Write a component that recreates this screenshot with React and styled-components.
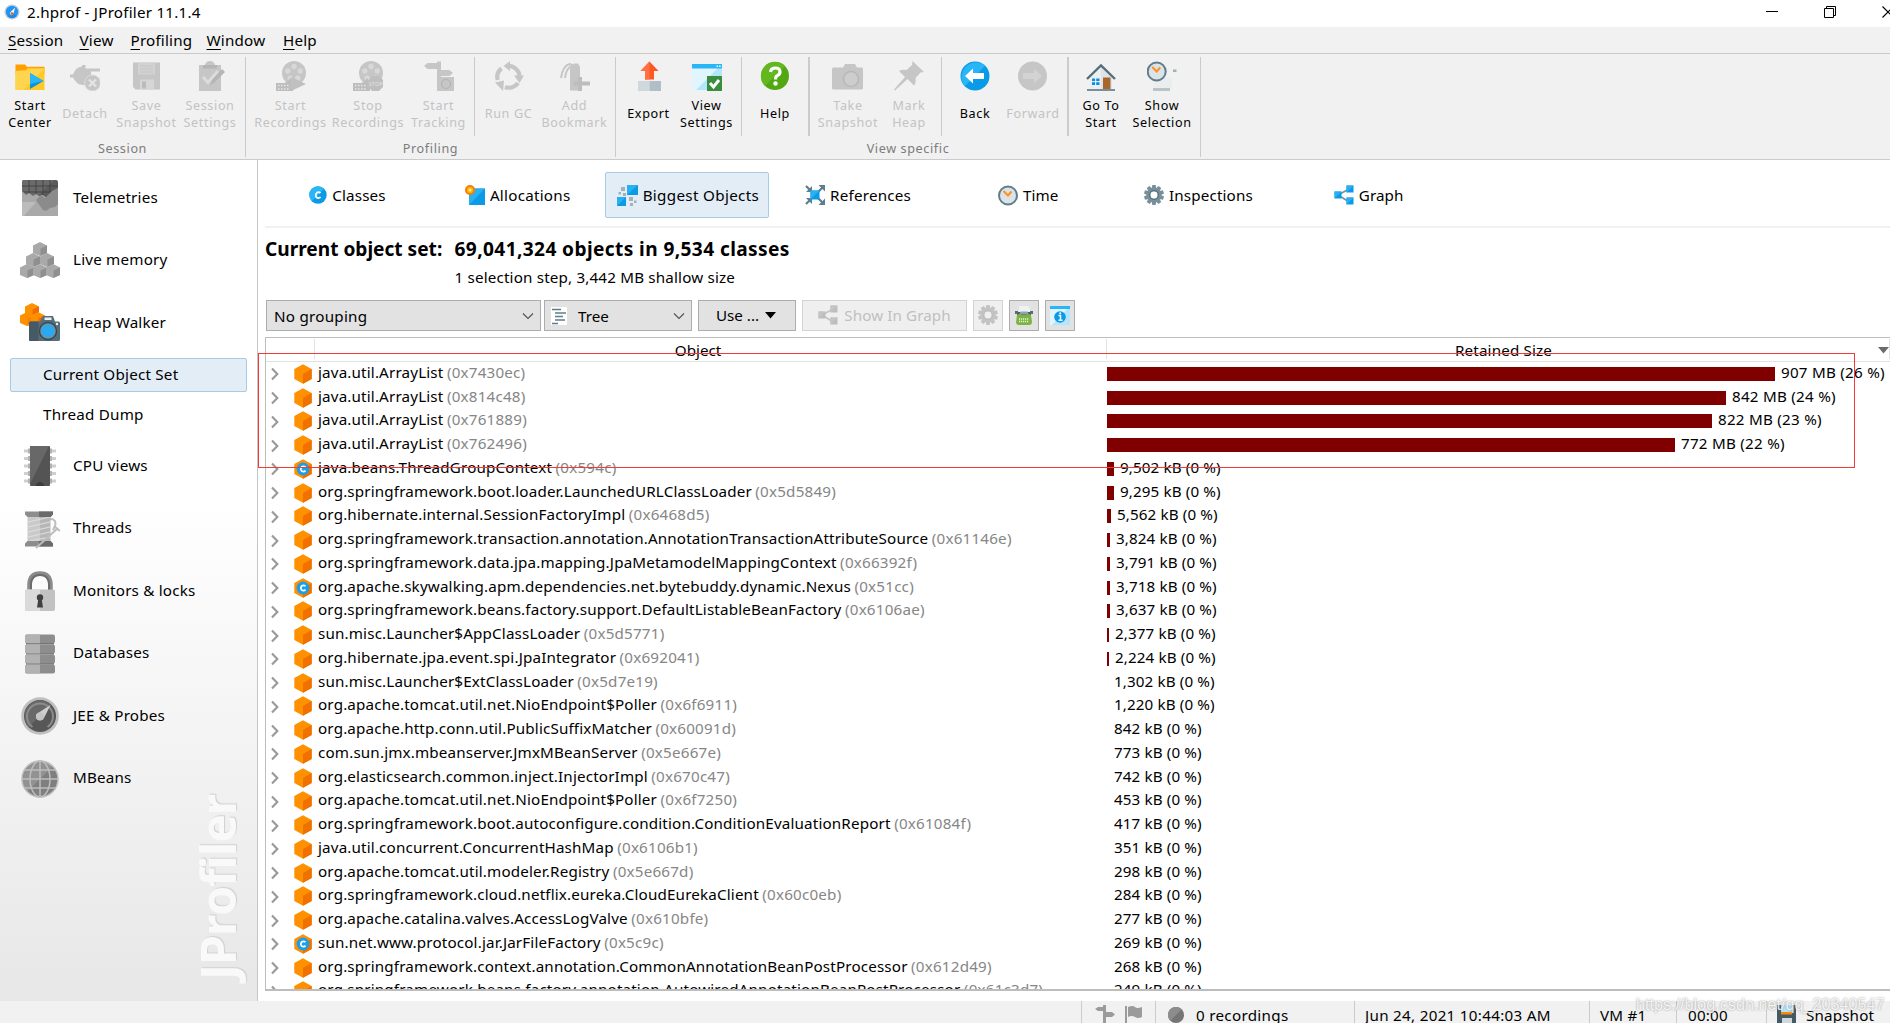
import React from "react";
import styled, { createGlobalStyle, css } from "styled-components";

const GlobalStyle = createGlobalStyle`
  * { box-sizing: border-box; }
  body { margin: 0; background: #fff; overflow: hidden; }
`;

const FONT = `"Noto Sans", "Open Sans", sans-serif`;

const Window = styled.div`
  position: relative;
  width: 1890px;
  height: 1023px;
  overflow: hidden;
  display: flex;
  flex-direction: column;
  background: #fff;
  color: #000;
  font-family: ${FONT};
  font-size: 15.2px;
  white-space: nowrap;
`;

/* ---------- title + menu ---------- */
const TitleBar = styled.header`
  height: 27px;
  flex: none;
  display: flex;
  align-items: center;
  padding: 0 0 3px 4px;
  gap: 7px;
`;
const TitleText = styled.span`
  flex: 1;
  letter-spacing: 0.22px;
`;
const WindowButtons = styled.div`
  display: flex;
  align-items: center;
  gap: 46px;
  margin-right: -4px;
`;
const MenuBar = styled.nav`
  height: 27px;
  flex: none;
  display: flex;
  align-items: center;
  background: #f1f1f1;
  border-bottom: 1px solid #cbcbcb;
  padding: 0 0 1px 8px;
`;
const MenuItem = styled.span`
  width: ${(p) => p.$w}px;
  letter-spacing: 0.2px;
  u { text-underline-offset: 3px; text-decoration-thickness: 1px; }
`;

/* ---------- toolbar ---------- */
const Toolbar = styled.div`
  height: 106px;
  flex: none;
  display: flex;
  background: #f1f1f1;
  border-bottom: 1px solid #cbcbcb;
  padding-top: 3px;
`;
const ToolGroup = styled.section`
  width: ${(p) => p.$w}px;
  height: 100px;
  border-right: 1px solid #cbcbcb;
  display: flex;
  flex-direction: column;
`;
const ToolRow = styled.div`
  height: 79px;
  display: flex;
  padding-left: ${(p) => p.$pl || 0}px;
`;
const ToolDivider = styled.i`
  width: ${(p) => p.$w || 1}px;
  margin-left: ${(p) => p.$ml || 0}px;
  background: #cbcbcb;
`;
const ToolButton = styled.button`
  width: ${(p) => p.$w}px;
  padding: 4px 0 0;
  border: 0;
  background: none;
  font: 12.6px/17px ${FONT};
  letter-spacing: 0.62px;
  color: ${(p) => (p.$off ? "#c3c3c3" : "#000")};
  display: flex;
  flex-direction: column;
  align-items: center;
  svg { flex: none; display: block; }
`;
const ToolLabel = styled.span`
  height: 34px;
  margin-top: ${(p) => (p.$single ? 5 : 6)}px;
  display: flex;
  flex-direction: column;
  align-items: center;
  justify-content: center;
`;
const GroupLabel = styled.div`
  height: 21px;
  padding-top: 2px;
  text-align: center;
  font-size: 12.6px;
  line-height: 22px;
  letter-spacing: 0.62px;
  color: #7c7c7c;
`;

/* ---------- sidebar ---------- */
const Body = styled.div`
  height: 841px;
  flex: none;
  display: flex;
`;
const Sidebar = styled.aside`
  position: relative;
  width: 258px;
  flex: none;
  border-right: 1px solid #c6c6c6;
  padding-top: 7px;
  background: linear-gradient(#fff 0%, #fff 40%, #e7e7e7 100%);
`;
const NavItem = styled.div`
  height: 62.5px;
  display: flex;
  align-items: center;
  padding-left: 20px;
  gap: 13px;
  letter-spacing: 0.2px;
  svg { flex: none; }
  span { margin-top: -3px; }
`;
const SubItem = styled.div`
  height: 34px;
  margin: 3px 10px 0;
  padding: 0 0 1px 32px;
  display: flex;
  align-items: center;
  letter-spacing: 0.22px;
  border: 1px solid ${(p) => (p.$active ? "#a6cce7" : "transparent")};
  border-radius: 2px;
  background: ${(p) => (p.$active ? "#e3edf6" : "transparent")};
  & + & { margin: 6px 10px 3.5px; }
`;
const Brand = styled.div`
  position: absolute;
  left: 191px;
  bottom: 21px;
  width: 52px;
  height: 200px;
  writing-mode: vertical-rl;
  transform: rotate(180deg);
  font: 700 48.5px/52px "Open Sans", sans-serif;
  letter-spacing: -1.4px;
  color: #f9f9f9;
  text-shadow: 1px 1px 1px #d0d0d0;
`;

/* ---------- main ---------- */
const Main = styled.main`
  flex: 1;
  min-width: 0;
  padding-left: 7px;
  display: flex;
  flex-direction: column;
`;
const Tabs = styled.div`
  height: 68px;
  flex: none;
  display: flex;
  gap: 6.2px;
  padding: 12px 0 0 0;
  border-bottom: 2px solid #f1f1f1;
`;
const Tab = styled.div`
  width: 164px;
  height: 46px;
  display: flex;
  align-items: center;
  justify-content: center;
  gap: 5px;
  padding-left: 1px;
  letter-spacing: ${(p) => p.$ls}px;
  border: 1px solid ${(p) => (p.$active ? "#a6cce7" : "transparent")};
  background: ${(p) => (p.$active ? "#e3edf6" : "transparent")};
  border-radius: 2px;
  span { margin-bottom: 1px; }
`;
const Summary = styled.div`
  height: 72px;
  flex: none;
  display: grid;
  grid-template-columns: 189.5px 1fr;
  grid-template-rows: 29px 24px;
  padding-top: 6px;
  align-items: center;
`;
const Heading = styled.h1`
  margin: 0;
  font-size: 19.1px;
  font-weight: 700;
  letter-spacing: ${(p) => p.$ls || 0}px;
`;
const Sub = styled.div`
  grid-column: 2;
  padding-top: 4px;
  letter-spacing: 0.17px;
`;
const Controls = styled.div`
  height: 37px;
  flex: none;
  display: flex;
  padding-left: 1px;
`;
const Control = styled.div`
  width: ${(p) => p.$w}px;
  height: 31px;
  margin-right: ${(p) => p.$mr}px;
  padding: ${(p) => p.$pad || "0"};
  display: flex;
  align-items: center;
  justify-content: ${(p) => (p.$spread ? "space-between" : "center")};
  gap: ${(p) => p.$gap || 6}px;
  border: 1px solid;
  ${(p) =>
    p.$off
      ? css`border-color: #d3d3d3; background: #efefef; color: #c0c0c0; letter-spacing: 0.1px;`
      : css`border-color: #adadad; background: #e2e2e2;`}
`;
const Inline = styled.span`
  display: flex;
  align-items: center;
  gap: 11px;
`;
const Table = styled.div`
  height: 654px;
  flex: none;
  overflow: hidden;
  border: 1px solid #bdbdbd;
  border-right: 0;
  border-bottom-width: 2px;
`;
const HeaderRow = styled.div`
  height: 24px;
  display: flex;
  border-bottom: 1px solid #e2e2e2;
  line-height: 24px;
`;
const HeaderCell = styled.div`
  width: ${(p) => p.$w}px;
  margin: 1px 0 2px;
  padding: 2px ${(p) => p.$pr || 0}px 0 0;
  text-align: center;
  border-right: 1px solid #e2e2e2;
  flex: ${(p) => (p.$grow ? 1 : "none")};
  display: flex;
  align-items: center;
  justify-content: center;
`;
const HeaderTitle = styled.span`
  flex: 1;
  padding-left: 22px;
  text-align: center;
  letter-spacing: 0.15px;
`;
const Row = styled.div`
  height: 23.76px;
  display: flex;
  align-items: center;
`;
const NameCell = styled.div`
  width: 841px;
  flex: none;
  display: flex;
  align-items: center;
  padding-left: 5px;
  svg { flex: none; }
`;
const Name = styled.span`
  margin: -4px 3.5px 0 6px;
  letter-spacing: 0.16px;
`;
const Address = styled.span`
  margin-top: -4px;
  color: #868686;
  letter-spacing: 0.2px;
`;
const Bar = styled.i`
  height: 14px;
  flex: none;
  background: #800000;
`;
const Size = styled.span`
  margin: -4px 0 0 ${(p) => (p.$bare ? 7 : 6)}px;
  letter-spacing: ${(p) => (p.$wide ? 0.24 : 0.12)}px;
`;

/* ---------- status ---------- */
const StatusBar = styled.footer`
  height: 22px;
  flex: none;
  display: flex;
  background: #f1f1f1;
  padding-left: 1081px;
`;
const StatusCell = styled.div`
  width: ${(p) => p.$w}px;
  height: 28px;
  flex: none;
  border-left: 1px solid #cbcbcb;
  padding-left: ${(p) => p.$pl}px;
  display: flex;
  align-items: center;
  gap: ${(p) => p.$gap || 10}px;
  letter-spacing: ${(p) => p.$ls || 0}px;
`;
const Watermark = styled.div`
  position: absolute;
  left: 1636px;
  top: 993px;
  font: 16.2px/22px "Liberation Sans", Arial, sans-serif;
  color: rgba(255, 255, 255, 0.85);
  text-shadow: 0 0 2px rgba(110, 110, 110, 0.75);
`;
const Annotation = styled.div`
  position: absolute;
  left: 258px;
  top: 353px;
  width: 1597px;
  height: 115px;
  border: 1px solid #f23b36;
`;

/* ---------- icons ---------- */
const G = "#c6c6c6";
const Svg = ({ s = 30, w, h, vb, children }) => (
  <svg width={w || s} height={h || s} viewBox={vb || `0 0 ${w || s} ${h || s}`}>{children}</svg>
);

const AppIcon = () => (
  <Svg s={16}>
    <circle cx="8" cy="8" r="7.6" fill="#c9d0d4" />
    <circle cx="8" cy="8" r="6.2" fill="#2196f3" />
    <path d="M8 8 3.6 12.3A6.2 6.2 0 0 0 12.4 12.3z" fill="#1e88e5" />
    <path d="M11.2 3.6 6.2 8.6Q5.8 11.2 7.4 11.2 9 11 9.4 9.4z" fill="#fff" />
    <circle cx="8" cy="9.6" r="1.3" fill="#f4511e" />
  </Svg>
);
const icons = {
  folder: (
    <Svg>
      <path d="M.5 3.5h9.500l2 2.300h17.500v7H.5z" fill="#ffa000" />
      <path d="M.5 10l10.500-.5 1.500-2h17V29H.5z" fill="#ffca28" />
      <path d="M.5 10l10.500-.5 1.500-2h17L8 29H.5z" fill="#ffd54f" />
      <path d="M15 12v16l13.500-8z" fill="#0a93de" />
      <path d="M15 12v11l13.500-3z" fill="#29b6f6" />
    </Svg>
  ),
  detach: (
    <Svg>
      <path d="M0 13.500h3Q5.500 6 12 5.500V4h3.500v3.500H30v3h-9V15h-1v7h-4.500v2H12Q6 23 3 16.500H0z" fill={G} />
      <circle cx="22.500" cy="22" r="8" fill={G} stroke="#dedede" strokeWidth=".8" />
      <path d="m19 18.500 7 7m0-7-7 7" stroke="#e4e4e4" strokeWidth="2.400" />
    </Svg>
  ),
  save: (
    <Svg w={29}>
      <path d="M1 1.500h27v27H3.500L1 26z" fill={G} />
      <path d="M6 1.500h17v12H6z" fill="#d2d2d2" />
      <path d="M8 5h13M8 8h13M8 11h13" stroke={G} />
      <path d="M8 18.500h14v10H8z" fill="#d6d6d6" />
      <path d="M10 20.500h4v7h-4z" fill="#bcbcbc" />
    </Svg>
  ),
  clipboard: (
    <Svg>
      <path d="M4 4h6q1-4 5-4t5 4h6v26H4z" fill={G} />
      <path d="M8 4h14v3.500H8z" fill="#b5b5b5" />
      <path d="m8 16 5 5.500L23 10" stroke="#dcdcdc" strokeWidth="3" fill="none" />
      <path d="m15 24 2-5L27 8l3 3-11 11z" fill="#b5b5b5" />
    </Svg>
  ),
  reelPlay: <Reel play />,
  reelStop: <Reel />,
  track: (
    <Svg>
      <g fill={G}>
        <path d="M0 5 3.500 2H13V.500h4V9h8.500L29 12l-3.500 3H17v15h-4V8H3.500z" />
        <path d="M14 16h16v14H14z" />
      </g>
      <circle cx="22" cy="23" r="4.500" fill="none" stroke="#b3b3b3" strokeWidth="1.200" />
    </Svg>
  ),
  gc: (
    <Svg>
      <g fill="none" stroke={G} strokeWidth="4.200">
        <path d="M3.700 19A11 11 0 0 1 7.500 7.500" />
        <path d="M13 5A11 11 0 0 1 25.500 15" />
        <path d="M24 22A11 11 0 0 1 11 26" />
      </g>
      <path d="M16 0v10L9.500 5zM30 14.500 25.500 22 20 14.500zM1 21.500l9-2-1 10.500z" fill={G} />
    </Svg>
  ),
  bookmark: (
    <Svg>
      <path d="M1 17Q3 4 10 3q5 1 4 10M5 17q1-10 7-12" fill="none" stroke={G} strokeWidth="2" />
      <path d="M10 6l4-3.500h4L20 6v23.500H10z" fill={G} />
      <path d="M20 16v14M13.500 22.500h16.500" stroke="#bdbdbd" strokeWidth="4" />
    </Svg>
  ),
  exportI: (
    <Svg>
      <path d="M4 20H15.500v10.500H4z" fill="#cfd8dc" />
      <path d="M15.500 20h11.500v10.500H15.500z" fill="#b0bec5" />
      <path d="M15.500.500 24.500 10H20v8.500h-9V10H6.500z" fill="#ff5722" />
      <path d="M15.500.500 6.500 10H11v8.500h4.500z" fill="#ff7043" />
    </Svg>
  ),
  view: (
    <Svg>
      <path d="M0 3h30v26H0z" fill="#b3e5fc" />
      <path d="M0 3h30L4 29H0z" fill="#e1f5fe" />
      <path d="M0 3h30v4.500H0z" fill="#29b6f6" />
      <path d="M24.500 5.200h1.600M27 5.200h1.600" stroke="#fff" strokeWidth="1.400" />
      <path d="M15 15h15v15H15z" fill="#388e3c" />
      <path d="m18 22 3.500 4L27 19" fill="none" stroke="#fff" strokeWidth="3" />
    </Svg>
  ),
  help: (
    <Svg>
      <circle cx="15" cy="15" r="14" fill="#52a812" />
      <path d="M5 25A14 14 0 0 1 25 5z" fill="#64b81f" />
      <path d="M10.500 11Q11 7 15.500 7T20 11q0 2.300-2.700 3.700Q15.500 15.700 15.500 18.500" fill="none" stroke="#fff" strokeWidth="3.200" />
      <circle cx="15.500" cy="22.500" r="2.200" fill="#fff" />
    </Svg>
  ),
  camera: (
    <Svg w={32} h={30}>
      <path d="M0 8q0-1.500 1.500-1.500H11L13 3h10l2 3.500h4.500Q31 6.500 31 8v19q0 1.500-1.500 1.500h-28Q0 28.500 0 27z" fill={G} />
      <circle cx="19" cy="18" r="7.500" fill="#cdcdcd" stroke="#b8b8b8" strokeWidth="1.600" />
    </Svg>
  ),
  pin: (
    <Svg>
      <path d="M18.500 0 30 11l-3.500.5-5 5.500q1 5-1.500 7.500L13.500 18 1 29.500 0 28.500 11 16 5 10q3-2 7.500-1L18 4z" fill={G} />
    </Svg>
  ),
  back: (
    <Svg>
      <circle cx="15" cy="15" r="14.500" fill="#0a9be8" />
      <path d="M4.800 25.200A14.500 14.500 0 0 1 25.200 4.800z" fill="#29b6f6" />
      <path d="M5 15l8-7.500V12h11v6H13v4.500z" fill="#fff" />
    </Svg>
  ),
  forward: (
    <Svg>
      <circle cx="14.500" cy="15" r="14.500" fill={G} />
      <path d="M24 15l-8-7.500V12H5v6h11v4.500z" fill="#d3d3d3" />
    </Svg>
  ),
  home: (
    <Svg>
      <path d="M4 15 15 5l11 10v13H4z" fill="#eceff1" />
      <path d="M15 5l11 10v13H15z" fill="#dfe3e6" />
      <path d="M1 28h28v2H1z" fill="#78909c" />
      <path d="M1 18 15 4.500 29 18" fill="none" stroke="#546e7a" strokeWidth="2.400" />
      <path d="M17 16.500h7.500V28H17z" fill="#a8662a" />
      <path d="M6 17.500h7.500v6.500H6z" fill="#0a8fdc" />
      <path d="M9.700 17v8M5.500 20.700h8.500" stroke="#fff" strokeWidth="1" />
    </Svg>
  ),
  showSel: (
    <Svg>
      <path d="M7 16h18v11H7z" fill="#eaeeef" />
      <path d="M6 27h17v3H6z" fill="#b8c4ca" />
      <rect x="26" y="8.500" width="3.500" height="2.500" fill="#9fb0b8" />
      <g transform="translate(-.300 0)"><Clock /></g>
    </Svg>
  ),
};
function Clock() {
  return (
    <>
      <circle cx="10" cy="10.500" r="9" fill="#dce3e6" stroke="#607d8b" strokeWidth="2" />
      <path d="M5.500 6 10 10.500 13.500 6.500" fill="none" stroke="#ff9020" strokeWidth="2" />
    </>
  );
}
function Reel({ play }) {
  return (
    <Svg>
      <circle cx="18" cy="12" r="12" fill={G} />
      <g fill="#d8d8d8">
        <circle cx="18" cy="5.500" r="2.700" /><circle cx="11.800" cy="10" r="2.700" /><circle cx="24.200" cy="10" r="2.700" />
        <circle cx="14.200" cy="17.300" r="2.700" /><circle cx="21.800" cy="17.300" r="2.700" />
      </g>
      <path d="M0 22h8q4-1 6-5l3 5v8H0z" fill="#bdbdbd" />
      <path d="M2 24.500h11M2 28h11" stroke="#e6e6e6" strokeWidth="1.300" strokeDasharray="1.500 1.500" />
      {play ? (
        <path d="M15 16v14l15-7z" fill="#c0c0c0" />
      ) : (
        <>
          <path d="M19 15h7l4.500 4.500v6L26 30h-7l-4-4.500v-6z" fill="#bfbfbf" />
          <text x="22.700" y="24.500" fontSize="5.500" fontWeight="700" fill="#d8d8d8" textAnchor="middle" letterSpacing="0">STOP</text>
        </>
      )}
    </Svg>
  );
}

const Cube = ({ x, y, c, d }) => (
  <g transform={`translate(${x} ${y})`}>
    <path d="M7 0l7 3.500v7.500L7 14 0 11V3.500z" fill={c} />
    <path d="M14 3.500V11L7.500 14V6.500z" fill={d} />
  </g>
);
const side = {
  tele: (
    <Svg s={40}>
      <rect x="2" y="2" width="36" height="36" rx="2" fill="#5a5a5a" />
      <path d="M2 4q0-2 2-2h30L14 22H2z" fill="#6a6a6a" />
      <path d="M2 8h36M2 14h36M9 2v16M16 2v16M23 2v16M30 2v16" stroke="#444" strokeWidth="1" />
      <path d="M2 13l4 4 3-2 4 3 3-2 3 2 4-1 4 3 4-5 4-2 3-3v26q0 2-2 2H4q-2 0-2-2z" fill="#a9a9a9" />
      <path d="M16 22l5-5 4 3 3-3 4-4 6-3v16l-3 3-5 1-4 3-3-1-3-4z" fill="#8b8b8b" />
      <path d="M2 24l14 0L4 38q-2 0-2-2z" fill="#bcbcbc" />
    </Svg>
  ),
  live: (
    <Svg s={40}>
      <Cube x={13} y={1} c="#a9a9a9" d="#8f8f8f" />
      <Cube x={6} y={12} c="#a9a9a9" d="#8f8f8f" /><Cube x={20} y={12} c="#a9a9a9" d="#8f8f8f" />
      <Cube x={0} y={23} c="#a9a9a9" d="#8f8f8f" /><Cube x={13} y={23} c="#a9a9a9" d="#8f8f8f" /><Cube x={26} y={23} c="#a9a9a9" d="#8f8f8f" />
    </Svg>
  ),
  heap: (
    <Svg s={40}>
      <Cube x={5} y={0} c="#ff9100" d="#ef6c00" />
      <Cube x={0} y={9} c="#ff9100" d="#ff8000" /><Cube x={11} y={9} c="#ff8f00" d="#ef6c00" />
      <path d="M9 20q0-1.500 1.500-1.500H20l3-5.500h10l2 5.500h3.500q1.500 0 1.500 1.500v16.500Q40 38 38.500 38h-28Q9 38 9 36.500z" fill="#546e7a" />
      <path d="M9 20q0-1.500 1.500-1.500h8V38h-8Q9 38 9 36.500z" fill="#455a64" />
      <path d="M24.500 14.500h7v2.500h-7z" fill="#eceff1" />
      <circle cx="28" cy="28" r="9.200" fill="#37474f" /><circle cx="28" cy="28" r="7.800" fill="#78909c" /><circle cx="28" cy="28" r="6.500" fill="#29a9f2" />
      <circle cx="37" cy="21" r="1.200" fill="#eceff1" />
    </Svg>
  ),
  cpu: (
    <Svg s={40}>
      <path d="M4 5h32M4 12.500h32M4 20h32M4 27.500h32M4 35h32" stroke="#cfcfcf" strokeWidth="3" />
      <path d="M8 5h24M8 12.500h24M8 20h24M8 27.500h24M8 35h24" stroke="#b3b3b3" strokeWidth="5" />
      <rect x="10" y="0" width="20" height="40" rx="1" fill="#545454" />
      <path d="M11 0h18L10 38V1q0-1 1-1z" fill="#686868" />
      <path d="M16 40a4 4 0 0 1 8 0z" fill="#3d3d3d" />
    </Svg>
  ),
  threads: (
    <Svg s={40}>
      <path d="M7.500 7H20v26H7.500z" fill="#cacaca" /><path d="M20 7h10.500v26H20z" fill="#b7b7b7" />
      <path d="M8 13l22-5M8 18l22-5M8 23l22-5M8 28l22-5M10 32l20-4" stroke="#dedede" strokeWidth="1.200" />
      <path d="M5 2.500h28v3L30.500 8h-23L5 5.500zM5 37.500h28v-3L30.500 32h-23L5 34.500z" fill="#8d8d8d" />
      <path d="M19 2.500h14v3L30.500 8H19zM19 37.500h14v-3L30.500 32H19z" fill="#6b6b6b" />
      <path d="M30 10q7 0 5 7l-2 4M16 39l22-20M34 17l6 5" fill="none" stroke="#bdbdbd" strokeWidth="2" />
    </Svg>
  ),
  lock: (
    <Svg s={40}>
      <path d="M9.500 20v-7Q10 2.500 20 2.500T30.500 13v7" fill="none" stroke="#8a8a8a" strokeWidth="4.500" />
      <path d="M11 20v-7Q11.500 4 20 4t9 9v7" fill="none" stroke="#6c6c6c" strokeWidth="2" />
      <rect x="5" y="18.500" width="30" height="21.500" rx="2" fill="#c2c2c2" />
      <path d="M5 20.500q0-2 2-2h13V40H7q-2 0-2-2z" fill="#dadada" />
      <circle cx="20" cy="26.500" r="3.200" fill="#404040" /><path d="M18.500 27h3l1.500 9.500h-6z" fill="#404040" />
    </Svg>
  ),
  db: (
    <Svg s={40}>
      {[0, 1, 2, 3].map((i) => (
        <g key={i} transform={`translate(0 ${i * 10.1})`}>
          {i < 3 && <path d="M6 7.500h28v3H6z" fill="#6d6d6d" />}
          <rect x="5" y="0.500" width="30" height="8.800" rx="2" fill="#8d8d8d" />
          <path d="M7 .500h13v8.800H7q-2 0-2-2v-4.800q0-2 2-2z" fill="#b2b2b2" />
        </g>
      ))}
    </Svg>
  ),
  gauge: (
    <Svg s={40}>
      <circle cx="20" cy="20" r="18.800" fill="#bfbfbf" />
      <circle cx="20" cy="20" r="16" fill="#575757" />
      <path d="M8.700 31.300A16 16 0 0 1 31.300 8.700z" fill="#686868" />
      <path d="M12.500 31A13 13 0 1 1 27.500 31" fill="none" stroke="#8c8c8c" strokeWidth="2" />
      <path d="M30.500 9 24 22q-2 3-5.500 2-4-2-2-6z" fill="#cfcfcf" /><circle cx="20" cy="20.500" r="4" fill="#c4c4c4" />
    </Svg>
  ),
  globe: (
    <Svg s={40}>
      <circle cx="20" cy="20" r="18" fill="#7f7f7f" />
      <path d="M7.300 32.700A18 18 0 0 1 32.700 7.300z" fill="#929292" />
      <g fill="none" stroke="#bdbdbd" strokeWidth="1.500">
        <circle cx="20" cy="20" r="18" /><ellipse cx="20" cy="20" rx="10" ry="18" />
        <path d="M20 2v36M2 20h36M5 11h30M5 29h30" />
      </g>
    </Svg>
  ),
};

const GraphGlyph = ({ a, b, l }) => (
  <Svg s={20}>
    <path d="M4 10 16 3.500M4 10l12 7.500" stroke={l} strokeWidth="1.600" />
    <path d="M.500 6.500h7v7h-7zM12.500.500h7v7h-7zM12.500 12.500h7v7h-7z" fill={a} />
    <path d="M.500 6.500h7l-7 7zM12.500.500h7l-7 7zM12.500 12.500h7l-7 7z" fill={b} />
  </Svg>
);
const teeth = Array.from({ length: 10 }, (_, i) => i * 36);
const Gear = ({ c, c2 }) => (
  <Svg s={20}>
    {teeth.map((a) => (
      <path key={a} d="M8.300 0h3.400l.6 4H7.700z" fill={c} transform={`rotate(${a} 10 10)`} />
    ))}
    <circle cx="10" cy="10" r="5.600" fill="none" stroke={c} strokeWidth="3.600" />
    <circle cx="10" cy="10" r="4.300" fill="none" stroke={c2} strokeWidth="1.200" />
  </Svg>
);
const tabIcons = {
  classes: (
    <Svg s={18}>
      <circle cx="9" cy="9" r="8.700" fill="#0a9ae6" />
      <path d="M2.800 15.200A8.700 8.700 0 0 1 15.200 2.800z" fill="#29b6f6" />
      <path d="M11.500 7Q9.800 5.500 8.200 6.500 6.600 7.600 6.800 9.700 7.300 12 9.200 12q1.500 0 2.300-1" fill="none" stroke="#fff" strokeWidth="1.900" />
    </Svg>
  ),
  alloc: (
    <Svg s={20}>
      <path d="M4 3.500h16V20H4z" fill="#0a9ae6" /><path d="M4 3.500h16L4 20z" fill="#29b0f3" />
      <circle cx="5" cy="5" r="5" fill="#f57c00" /><circle cx="5" cy="5" r="3.200" fill="#ffb300" /><circle cx="5" cy="5" r="1.500" fill="#ffe9a8" />
    </Svg>
  ),
  biggest: (
    <Svg s={21}>
      <path d="M10 0h11v10H10z" fill="#0a9ae6" /><path d="M10 0h11L10 10z" fill="#29b0f3" />
      <path d="M0 12h9v9H0z" fill="#0a9ae6" /><path d="M0 12h9l-9 9z" fill="#29b0f3" />
      <path d="M4 2h4v4H4zM1.500 7H4v2.500H1.500zM6 8h3v3H6zM12 12h4v4h-4zM17 15.500h2.500V18H17zM13 18h3v3h-3z" fill="#a3b2ba" />
    </Svg>
  ),
  refs: (
    <Svg s={20}>
      <path d="M1 1l7 7M19 1l-7 7M1 19l7-7M19 19l-7-7" stroke="#607d8b" strokeWidth="2.200" />
      <path d="M1 7h6V1zM20 6.500V0h-6.500zM1 13h6v6zM20 13.500V20h-6.500z" fill="#607d8b" />
      <path d="M5.500 5.500h9v9h-9z" fill="#0a9ae6" /><path d="M5.500 5.500h9l-9 9z" fill="#29b0f3" />
    </Svg>
  ),
  time: <Svg w={20} h={21}><Clock /></Svg>,
  gear: <Gear c="#78909c" c2="#546e7a" />,
  graph: <GraphGlyph a="#0a9ae6" b="#29b0f3" l="#78909c" />,
};

const Hex = ({ cls }) => (
  <Svg w={18} h={20}>
    <path d="M9 .300 17.700 5v10L9 19.700.300 15V5z" fill="#ff9100" />
    <path d="M17.700 5v10L9 19.700V10z" fill="#f07000" />
    {cls && (
      <>
        <circle cx="9" cy="10" r="6.400" fill="#1a9fe8" />
        <path d="M11.500 8Q9.500 6.700 8 7.800 6.500 9 6.900 10.800 7.500 12.700 9.300 12.600q1.400-.1 2.200-1" fill="none" stroke="#fff" strokeWidth="1.800" />
      </>
    )}
  </Svg>
);
const Arrow = styled.svg`
  width: 8px;
  height: 14px;
  margin: 1px 15px 0 0;
`;
const Chevron = () => (
  <Svg w={12} h={8}><path d="M1 1.500l5 5 5-5" fill="none" stroke="#555" strokeWidth="1.200" /></Svg>
);

/* ---------- data ---------- */
const ROWS = [
  ["java.util.ArrayList", "0x7430ec", "907 MB (26 %)", 668],
  ["java.util.ArrayList", "0x814c48", "842 MB (24 %)", 619],
  ["java.util.ArrayList", "0x761889", "822 MB (23 %)", 605],
  ["java.util.ArrayList", "0x762496", "772 MB (22 %)", 568],
  ["java.beans.ThreadGroupContext", "0x594c", "9,502 kB (0 %)", 7, 1],
  ["org.springframework.boot.loader.LaunchedURLClassLoader", "0x5d5849", "9,295 kB (0 %)", 7],
  ["org.hibernate.internal.SessionFactoryImpl", "0x6468d5", "5,562 kB (0 %)", 4],
  ["org.springframework.transaction.annotation.AnnotationTransactionAttributeSource", "0x61146e", "3,824 kB (0 %)", 3],
  ["org.springframework.data.jpa.mapping.JpaMetamodelMappingContext", "0x66392f", "3,791 kB (0 %)", 3],
  ["org.apache.skywalking.apm.dependencies.net.bytebuddy.dynamic.Nexus", "0x51cc", "3,718 kB (0 %)", 3, 1],
  ["org.springframework.beans.factory.support.DefaultListableBeanFactory", "0x6106ae", "3,637 kB (0 %)", 3],
  ["sun.misc.Launcher$AppClassLoader", "0x5d5771", "2,377 kB (0 %)", 2],
  ["org.hibernate.jpa.event.spi.JpaIntegrator", "0x692041", "2,224 kB (0 %)", 2],
  ["sun.misc.Launcher$ExtClassLoader", "0x5d7e19", "1,302 kB (0 %)", 0],
  ["org.apache.tomcat.util.net.NioEndpoint$Poller", "0x6f6911", "1,220 kB (0 %)", 0],
  ["org.apache.http.conn.util.PublicSuffixMatcher", "0x60091d", "842 kB (0 %)", 0],
  ["com.sun.jmx.mbeanserver.JmxMBeanServer", "0x5e667e", "773 kB (0 %)", 0],
  ["org.elasticsearch.common.inject.InjectorImpl", "0x670c47", "742 kB (0 %)", 0],
  ["org.apache.tomcat.util.net.NioEndpoint$Poller", "0x6f7250", "453 kB (0 %)", 0],
  ["org.springframework.boot.autoconfigure.condition.ConditionEvaluationReport", "0x61084f", "417 kB (0 %)", 0],
  ["java.util.concurrent.ConcurrentHashMap", "0x6106b1", "351 kB (0 %)", 0],
  ["org.apache.tomcat.util.modeler.Registry", "0x5e667d", "298 kB (0 %)", 0],
  ["org.springframework.cloud.netflix.eureka.CloudEurekaClient", "0x60c0eb", "284 kB (0 %)", 0],
  ["org.apache.catalina.valves.AccessLogValve", "0x610bfe", "277 kB (0 %)", 0],
  ["sun.net.www.protocol.jar.JarFileFactory", "0x5c9c", "269 kB (0 %)", 0, 1],
  ["org.springframework.context.annotation.CommonAnnotationBeanPostProcessor", "0x612d49", "268 kB (0 %)", 0],
  ["org.springframework.beans.factory.annotation.AutowiredAnnotationBeanPostProcessor", "0x61c3d7", "249 kB (0 %)", 0],
];

const Tool = ({ w, icon, lines, off }) => (
  <ToolButton $w={w} $off={off}>
    {icons[icon]}
    <ToolLabel $single={lines.length === 1}>{lines.map((l) => <span key={l}>{l}</span>)}</ToolLabel>
  </ToolButton>
);

const MENU = [["S", "ession", 71.5], ["V", "iew", 51], ["P", "rofiling", 76], ["W", "indow", 76.5], ["H", "elp", 60]];
const TABS = [
  ["Classes", "classes", 0.15], ["Allocations", "alloc", 0.25], ["Biggest Objects", "biggest", 0.33], ["References", "refs", 0.22],
  ["Time", "time", 0.1], ["Inspections", "gear", 0.15], ["Graph", "graph", 0.1],
];

export default function App() {
  return (
    <Window>
      <GlobalStyle />
      <TitleBar>
        <AppIcon />
        <TitleText>2.hprof - JProfiler 11.1.4</TitleText>
        <WindowButtons>
          <Svg s={12}><path d="M0 5.500h12" stroke="#000" /></Svg>
          <Svg s={12}><path d="M.500 2.500h9v9h-9zM2.500 2.500v-2h9v9h-2" fill="none" stroke="#000" /></Svg>
          <Svg s={12}><path d="M.500.500l11 11M11.500.500l-11 11" stroke="#000" strokeWidth="1.200" /></Svg>
        </WindowButtons>
      </TitleBar>
      <MenuBar>
        {MENU.map(([a, b, w]) => <MenuItem key={b} $w={w}><u>{a}</u>{b}</MenuItem>)}
      </MenuBar>
      <Toolbar>
        <ToolGroup $w={246}>
          <ToolRow>
            <Tool w={60} icon="folder" lines={["Start", "Center"]} />
            <Tool w={50} icon="detach" lines={["Detach"]} off />
            <Tool w={73} icon="save" lines={["Save", "Snapshot"]} off />
            <Tool w={54} icon="clipboard" lines={["Session", "Settings"]} off />
          </ToolRow>
          <GroupLabel>Session</GroupLabel>
        </ToolGroup>
        <ToolGroup $w={370}>
          <ToolRow $pl={6}>
            <Tool w={77} icon="reelPlay" lines={["Start", "Recordings"]} off />
            <Tool w={78} icon="reelStop" lines={["Stop", "Recordings"]} off />
            <Tool w={63} icon="track" lines={["Start", "Tracking"]} off />
            <ToolDivider $ml={4} />
            <Tool w={67} icon="gc" lines={["Run GC"]} off />
            <Tool w={65} icon="bookmark" lines={["Add", "Bookmark"]} off />
          </ToolRow>
          <GroupLabel>Profiling</GroupLabel>
        </ToolGroup>
        <ToolGroup $w={585}>
          <ToolRow>
            <Tool w={65} icon="exportI" lines={["Export"]} />
            <Tool w={51} icon="view" lines={["View", "Settings"]} />
            <ToolDivider $ml={9} />
            <Tool w={66} icon="help" lines={["Help"]} />
            <ToolDivider $w={2} />
            <Tool w={76} icon="camera" lines={["Take", "Snapshot"]} off />
            <Tool w={46} icon="pin" lines={["Mark", "Heap"]} off />
            <ToolDivider $ml={9} />
            <Tool w={66} icon="back" lines={["Back"]} />
            <Tool w={50} icon="forward" lines={["Forward"]} off />
            <ToolDivider $ml={9} $w={2} />
            <Tool w={64} icon="home" lines={["Go To", "Start"]} />
            <Tool w={58} icon="showSel" lines={["Show", "Selection"]} />
          </ToolRow>
          <GroupLabel>View specific</GroupLabel>
        </ToolGroup>
      </Toolbar>
      <Body>
        <Sidebar>
          <NavItem>{side.tele}<span>Telemetries</span></NavItem>
          <NavItem>{side.live}<span>Live memory</span></NavItem>
          <NavItem>{side.heap}<span>Heap Walker</span></NavItem>
          <SubItem $active>Current Object Set</SubItem>
          <SubItem>Thread Dump</SubItem>
          <NavItem>{side.cpu}<span>CPU views</span></NavItem>
          <NavItem>{side.threads}<span>Threads</span></NavItem>
          <NavItem>{side.lock}<span>Monitors &amp; locks</span></NavItem>
          <NavItem>{side.db}<span>Databases</span></NavItem>
          <NavItem>{side.gauge}<span>JEE &amp; Probes</span></NavItem>
          <NavItem>{side.globe}<span>MBeans</span></NavItem>
          <Brand>JProfiler</Brand>
        </Sidebar>
        <Main>
          <Tabs>
            {TABS.map(([t, i, ls]) => (
              <Tab key={t} $active={i === "biggest"} $ls={ls}>{tabIcons[i]}<span>{t}</span></Tab>
            ))}
          </Tabs>
          <Summary>
            <Heading>Current object set:</Heading>
            <Heading $ls={0.4}>69,041,324 objects in 9,534 classes</Heading>
            <Sub>1 selection step, 3,442 MB shallow size</Sub>
          </Summary>
          <Controls>
            <Control $w={275} $mr={3} $spread $pad="0 6px 0 7px"><ControlText>No grouping</ControlText><Chevron /></Control>
            <Control $w={148} $mr={6} $spread $pad="0 6px 0 6px">
              <Inline>
                <Svg w={16} h={18}>
                  <path d="M0 0h16v18H0z" fill="#fff" />
                  <path d="M1 2.500h9M4 6h11M4 9.500h8M4 13h10M1 16.500h6" stroke="#607d8b" strokeWidth="1.600" />
                </Svg>
                Tree
              </Inline>
              <Chevron />
            </Control>
            <Control $w={98} $mr={6} $gap={6} $pad="0 2px 1px 0">
              Use ...<Svg w={11} h={7}><path d="M0 0h11L5.500 6.500z" fill="#000" /></Svg>
            </Control>
            <Control $w={165} $mr={6} $off $pad="0 0 1px"><GraphGlyph a="#bdbdbd" b="#c4c4c4" l="#c4c4c4" />Show In Graph</Control>
            <Control $w={30} $mr={6} $off $pad="0 0 2px"><Gear c="#c3c3c3" c2="#bcbcbc" /></Control>
            <Control $w={30} $mr={6}>
              <Svg s={20}>
                <path d="M5 0h9l2 2v6H5z" fill="#eef2f4" />
                <path d="M3 6h14v4H3z" fill="#455a64" /><path d="M1 5h3v3H1zM16 5h3v3h-3z" fill="#546e7a" />
                <path d="M6.500 5.500h7l1.500 3H5z" fill="#90a4ae" />
                <path d="M3 9q3-2 5 0h4q2-2 5 0l1 7q0 3-3 3H5q-3 0-3-3z" fill="#7cb342" />
                <path d="M5 13h10M5 15.500h10" stroke="#e8f5d8" strokeWidth="1.300" strokeDasharray="1.200 .800" />
              </Svg>
            </Control>
            <Control $w={30} $mr={0}>
              <Svg s={20}>
                <path d="M0 0h20v19H0z" fill="#b3e5fc" /><path d="M0 0h20L2 19H0z" fill="#e1f5fe" /><path d="M0 0h20v3H0z" fill="#29b6f6" />
                <circle cx="10" cy="11" r="5.800" fill="#0a9ae6" /><path d="M8.500 9.500H10.500v5M8.500 14.300h4" fill="none" stroke="#fff" strokeWidth="1.500" /><circle cx="10.200" cy="7.300" r="1" fill="#fff" />
              </Svg>
            </Control>
          </Controls>
          <Table>
            <HeaderRow>
              <HeaderCell $w={49} />
              <HeaderCell $w={792} $pr={25}>Object</HeaderCell>
              <HeaderCell $grow>
                <HeaderTitle>Retained Size</HeaderTitle>
                <Svg w={11} h={7}><path d="M0 0h11L5.500 6.500z" fill="#6b6b6b" /></Svg>
              </HeaderCell>
            </HeaderRow>
            {ROWS.map(([name, addr, size, w, cls]) => (
              <Row key={name + addr}>
                <NameCell>
                  <Arrow viewBox="0 0 8 14"><path d="M1 1.500 6.300 7 1 12.500" fill="none" stroke="#9a9a9a" strokeWidth="2.200" /></Arrow>
                  <Hex cls={cls} />
                  <Name>{name}</Name>
                  <Address>({addr})</Address>
                </NameCell>
                <Bar style={{ width: w }} />
                <Size $bare={!w} $wide={w > 100}>{size}</Size>
              </Row>
            ))}
          </Table>
        </Main>
      </Body>
      <StatusBar>
        <StatusCell $w={74} $pl={13}>
          <Svg w={20} h={22}><path d="M0 5l3-2h5V1h3v7h6l3 2.500-3 2.500h-6v9H8V7H3z" fill="#9b9b9b" /></Svg>
          <Svg w={17} h={22}><path d="M0 2h2v20H0zM3 3q5-2 7 0t7 0v10q-4 2-7 0t-7 0z" fill="#9b9b9b" /></Svg>
        </StatusCell>
        <StatusCell $w={199} $pl={12} $gap={12} $ls={0.3}>
          <Svg s={16}><circle cx="8" cy="8" r="8" fill="#757575" /><path d="M2.300 13.700A8 8 0 0 1 13.700 2.300z" fill="#8c8c8c" /></Svg>
          0 recordings
        </StatusCell>
        <StatusCell $w={235} $pl={10} $ls={0.3}>Jun 24, 2021 10:44:03 AM</StatusCell>
        <StatusCell $w={87} $pl={10} $ls={0.2}>VM #1</StatusCell>
        <StatusCell $w={90} $pl={11} $ls={0.2}>00:00</StatusCell>
        <StatusCell $w={124} $pl={10} $ls={0.15}>
          <Svg w={19} h={20}>
            <path d="M0 0h19v20H0z" fill="#455a64" /><path d="M4 0h11v9H4z" fill="#b3e5fc" /><path d="M4 7h11v2.500H4z" fill="#fb8c00" /><path d="M5 13h10v7H5z" fill="#cfd8dc" />
          </Svg>
          Snapshot
        </StatusCell>
      </StatusBar>
      <Annotation />
      <Watermark>https://blog.csdn.net/qq_20340547</Watermark>
    </Window>
  );
}

const ControlText = styled.span`
  letter-spacing: 0.25px;
`;
